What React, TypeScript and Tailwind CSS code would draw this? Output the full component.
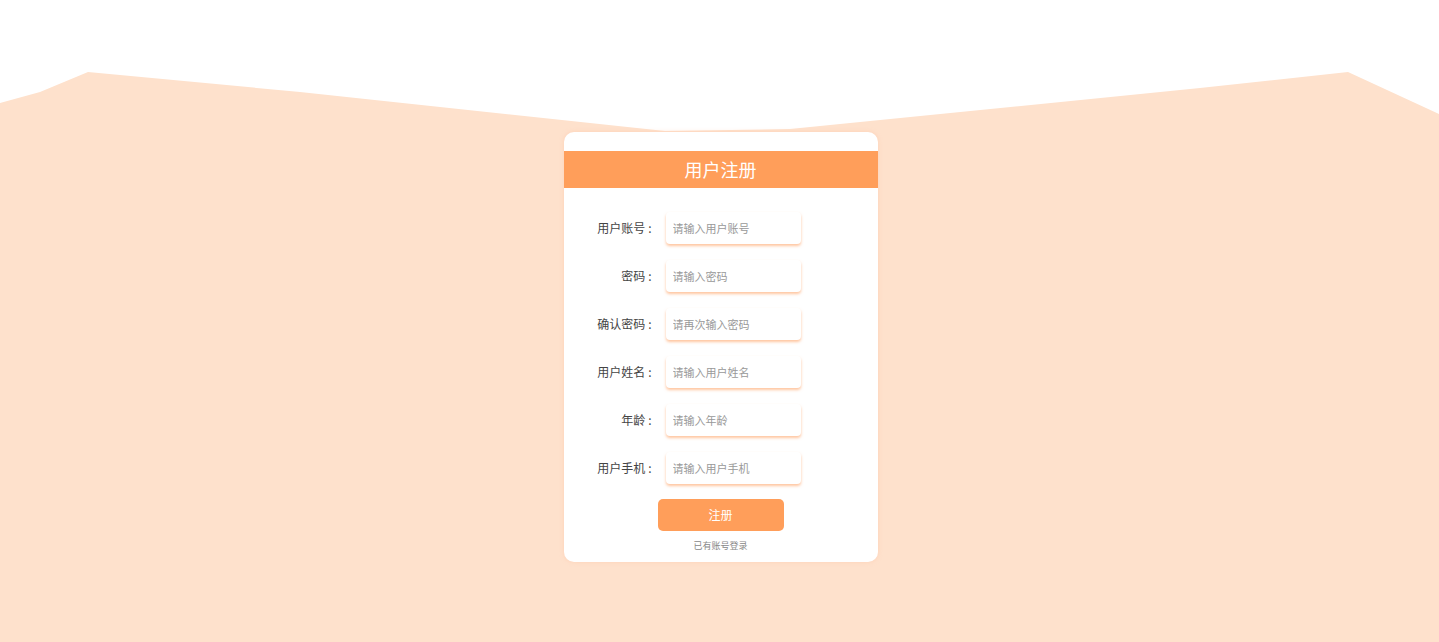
import React from 'react'

const fields = [
  { label: '用户账号', placeholder: '请输入用户账号', type: 'text' },
  { label: '密码', placeholder: '请输入密码', type: 'password' },
  { label: '确认密码', placeholder: '请再次输入密码', type: 'password' },
  { label: '用户姓名', placeholder: '请输入用户姓名', type: 'text' },
  { label: '年龄', placeholder: '请输入年龄', type: 'text' },
  { label: '用户手机', placeholder: '请输入用户手机', type: 'text' },
]

const font = { fontFamily: '"Noto Sans CJK SC", "Noto Sans", sans-serif' }

export default function App() {
  return (
    <div className="relative h-[642px] w-full overflow-hidden bg-white" style={font}>
      {/* peach backdrop */}
      <svg className="absolute inset-0 h-full w-full" viewBox="0 0 1439 642" preserveAspectRatio="none">
        <polygon
          fill="#fee1cc"
          points="0,103 40,92 88,72 300,92 665,131 790,129 1200,88 1348,72 1439,114 1439,642 0,642"
        />
      </svg>

      <div className="relative flex justify-center pt-[132px] pl-[2px]">
        <div className="w-[314px] rounded-[10px] bg-white pt-[19px] pb-[9px] shadow-[0_0_4px_rgba(255,200,170,0.6)]">
          <div className="flex h-[37px] items-center justify-center bg-[#ff9e5a]">
            <h1 className="text-[18px] text-white">用户注册</h1>
          </div>

          <form className="mt-6 flex flex-col gap-4">
            {fields.map((f) => (
              <div key={f.label} className="flex items-center">
                <label className="w-[88px] text-right text-[12px] text-[#444]">
                  {f.label}<span className="ml-[3px]">:</span>
                </label>
                <input
                  type="text"
                  placeholder={f.placeholder}
                  className="ml-[14px] h-8 w-[135px] rounded-[4px] bg-white px-[7px] text-[11px] text-[#333] shadow-[0_2px_3px_rgba(255,150,80,0.55)] outline-none placeholder:text-[#999]"
                />
              </div>
            ))}
          </form>

          <div className="mt-[15px] flex flex-col items-center">
            <button className="h-8 w-[126px] rounded-[5px] bg-[#ff9e5a] text-[12px] text-white">
              注册
            </button>
            <a className="mt-[8px] text-[9px] text-[#888]">已有账号登录</a>
          </div>
        </div>
      </div>
    </div>
  )
}
